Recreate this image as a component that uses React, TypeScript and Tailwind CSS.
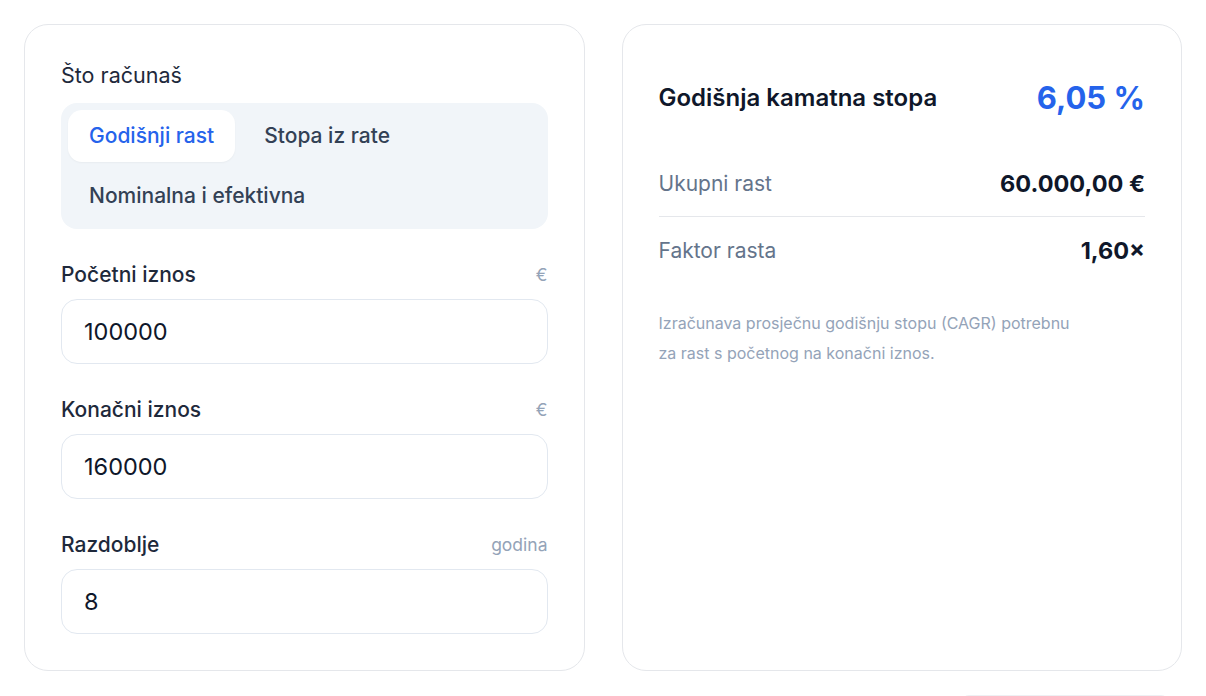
import React from "react";

function Field({ label, unit, value }: { label: string; unit: string; value: string }) {
  return (
    <div className="flex flex-col">
      <div className="flex items-center justify-between h-[28px]">
        <span className="text-[21px] font-medium text-[#1e293b]">{label}</span>
        <span className="text-[17.5px] text-[#94a3b8]">{unit}</span>
      </div>
      <div className="mt-[10px] h-[65px] rounded-[16px] border border-[#e2e8f0] bg-white flex items-center px-[22px]">
        <span className="text-[23.5px] text-[#0f172a]">{value}</span>
      </div>
    </div>
  );
}

export default function App() {
  return (
    <div className="min-h-screen bg-white px-6 pt-6 pb-6" style={{ fontFamily: "Inter, 'Noto Sans', sans-serif" }}>
      <div className="grid grid-cols-2 gap-[37px]">
        <div className="rounded-[24px] border border-[#e5e7eb] bg-white p-9 flex flex-col">
          <div className="h-[28px] flex items-center text-[21.5px] text-[#1e293b]">Što računaš</div>
          <div className="mt-[14px] rounded-[16px] bg-[#f1f5f9] p-[7px] flex flex-wrap gap-2">
            <div className="h-[52px] px-[21px] rounded-[14px] bg-white shadow-[0_1px_2px_rgba(0,0,0,0.04)] flex items-center text-[21px] font-medium text-[#2563eb]">Godišnji rast</div>
            <div className="h-[52px] px-[21px] rounded-[14px] flex items-center text-[21px] font-medium text-[#334155]">Stopa iz rate</div>
            <div className="h-[52px] px-[21px] rounded-[14px] flex items-center text-[21px] font-medium text-[#334155]">Nominalna i efektivna</div>
          </div>
          <div className="mt-[32px] flex flex-col gap-[32px]">
            <Field label="Početni iznos" unit="€" value="100000" />
            <Field label="Konačni iznos" unit="€" value="160000" />
            <Field label="Razdoblje" unit="godina" value="8" />
          </div>
        </div>
        <div className="rounded-[24px] border border-[#e5e7eb] bg-white p-9 flex flex-col">
          <div className="h-[74px] flex items-center justify-between">
            <span className="text-[24px] font-semibold text-[#0f172a]">Godišnja kamatna stopa</span>
            <span className="text-[31px] font-bold text-[#2563eb]">6,05 %</span>
          </div>
          <div className="mt-[16px] flex flex-col">
            <div className="h-[66px] flex items-center justify-between border-b border-[#e5e7eb]">
              <span className="text-[21px] text-[#64748b]">Ukupni rast</span>
              <span className="text-[23.5px] font-bold text-[#0f172a]">60.000,00 €</span>
            </div>
            <div className="h-[67px] flex items-center justify-between">
              <span className="text-[21px] text-[#64748b]">Faktor rasta</span>
              <span className="text-[23.5px] font-bold text-[#0f172a]">1,60×</span>
            </div>
          </div>
          <p className="mt-[24px] text-[16px] leading-[30px] text-[#94a3b8] max-w-[420px]">
            Izračunava prosječnu godišnju stopu (CAGR) potrebnu za rast s početnog na konačni iznos.
          </p>
        </div>
      </div>
      <div className="flex justify-end pr-[13px] mt-[24px]">
        <div className="w-[208px] h-[40px] rounded-t-[8px] border border-[#eef0f3]"></div>
      </div>
    </div>
  );
}
